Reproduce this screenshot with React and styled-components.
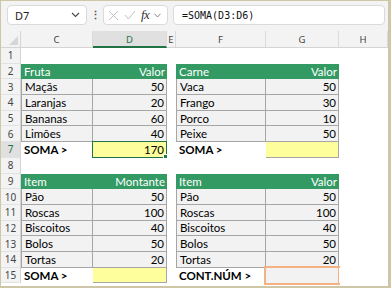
import styled, { createGlobalStyle } from "styled-components";

const Global = createGlobalStyle`
  html, body { margin: 0; padding: 0; background: #ffffff; }
  body { font-family: "Lato", "Liberation Sans", sans-serif; }
`;

const Frame = styled.div`
  width: 391px;
  height: 288px;
  box-sizing: border-box;
  border: 1px solid #cfc6a8;
  border-width: 1px 3px 2px 1px;
  background: #ffffff;
  overflow: hidden;
  display: flex;
  flex-direction: column;
`;

const FormulaBar = styled.div`
  height: 30px;
  background: #f3f3f3;
  display: flex;
  align-items: flex-start;
  padding: 4px 3px 0 6px;
  box-sizing: border-box;
  gap: 0;
`;

const Box = styled.div`
  height: 20px;
  box-sizing: border-box;
  background: #ffffff;
  border: 1px solid #dadada;
  border-radius: 4px;
  display: flex;
  align-items: center;
`;

const NameBox = styled(Box)`
  width: 80px;
  padding: 0 6px 0 7px;
  justify-content: space-between;
  font-family: "Noto Sans", sans-serif;
  font-size: 11px;
  color: #222;
`;

const Dots = styled.div`
  width: 16px;
  height: 20px;
  display: flex;
  align-items: center;
  justify-content: center;
  color: #555;
  font-size: 11px;
  font-weight: bold;
`;

const FxBox = styled(Box)`
  width: 65px;
  padding: 0 4px;
  gap: 5px;
  margin-right: 5px;
`;

const Fx = styled.span`
  font-family: "Liberation Serif", serif;
  font-style: italic;
  font-size: 13px;
  color: #333;
  letter-spacing: -0.5px;
`;

const FormulaInput = styled(Box)`
  flex: 1;
  padding-left: 8px;
  font-family: "DejaVu Sans Mono", monospace;
  font-size: 10px;
  color: #111;
`;

const Sheet = styled.div`
  display: grid;
  grid-template-columns: 20px 72px 74px 9px 90px 73px 49px;
  grid-template-rows: 17px repeat(15, 15.7px);
  font-size: 11.5px;
`;

const ColHead = styled.div`
  background: ${(p) => (p.$active ? "#e0e0e0" : "#f3f3f3")};
  color: ${(p) => (p.$active ? "#217346" : "#444")};
  border-bottom: ${(p) => (p.$active ? "2px solid #217346" : "1px solid #d4d4d4")};
  border-right: 1px solid #dadada;
  box-sizing: border-box;
  font-family: "Noto Sans", sans-serif;
  font-size: 9.5px;
  display: flex;
  align-items: center;
  justify-content: center;
  padding-top: 1px;
`;

const Corner = styled.div`
  background: #f3f3f3;
  border-right: 1px solid #d4d4d4;
  border-bottom: 1px solid #d4d4d4;
  box-sizing: border-box;
  position: relative;
  &::after {
    content: "";
    position: absolute;
    right: 2px;
    bottom: 2px;
    border-style: solid;
    border-width: 0 0 9px 9px;
    border-color: transparent transparent #d6d6d6 transparent;
  }
`;

const RowHead = styled.div`
  background: ${(p) => (p.$active ? "#e0e0e0" : "#f3f3f3")};
  color: ${(p) => (p.$active ? "#217346" : "#444")};
  border-right: 1px solid #d4d4d4;
  border-bottom: 1px solid #e2e2e2;
  box-sizing: border-box;
  font-family: "Noto Sans", sans-serif;
  font-size: 10px;
  display: flex;
  align-items: center;
  justify-content: center;
`;

const fills = {
  empty: "#ffffff",
  head: "#339a63",
  data: "#f2f2f2",
  sum: "#ffffff",
  yellow: "#fefe9c",
  count: "#f2f2f2",
};

const Cell = styled.div`
  position: relative;
  box-sizing: border-box;
  background: ${(p) => fills[p.$kind]};
  color: ${(p) => (p.$kind === "head" ? "#ffffff" : "#000000")};
  font-weight: ${(p) => (p.$kind === "sum" ? 700 : 400)};
  display: flex;
  align-items: center;
  justify-content: ${(p) => (p.$right ? "flex-end" : "flex-start")};
  padding: 0 2px 0 3px;
  white-space: nowrap;
  border-right: ${(p) => (p.$kind === "data" || p.$kind === "yellow" ? "1px solid #a6a6a6" : "none")};
  border-bottom: ${(p) => (p.$kind === "data" || p.$kind === "yellow" ? "1px solid #a6a6a6" : "none")};
  border-left: ${(p) => ((p.$kind === "data" || p.$kind === "yellow") && p.$first ? "1px solid #a6a6a6" : "none")};
`;

const Selected = styled.div`
  position: absolute;
  inset: -1px -1px -1px -1px;
  border: 1.5px solid #217346;
  pointer-events: none;
  &::after {
    content: "";
    position: absolute;
    right: -3px;
    bottom: -3px;
    width: 4px;
    height: 4px;
    background: #217346;
    border: 1px solid #fff;
  }
`;

const CountMark = styled.div`
  position: absolute;
  inset: -2px -1px -2px -2px;
  border: 2px solid #f4b183;
  pointer-events: none;
`;

const cols = ["C", "D", "E", "F", "G", "H"];

const h = (t, right) => ({ k: "head", t, right });
const d = (t, right) => ({ k: "data", t, right });

const rows = {
  2: { C: h("Fruta"), D: h("Valor", 1), F: h("Carne"), G: h("Valor", 1) },
  3: { C: d("Maçãs"), D: d("50", 1), F: d("Vaca"), G: d("50", 1) },
  4: { C: d("Laranjas"), D: d("20", 1), F: d("Frango"), G: d("30", 1) },
  5: { C: d("Bananas"), D: d("60", 1), F: d("Porco"), G: d("10", 1) },
  6: { C: d("Limões"), D: d("40", 1), F: d("Peixe"), G: d("50", 1) },
  7: {
    C: { k: "sum", t: "SOMA >" },
    D: { k: "yellow", t: "170", right: 1, selected: 1 },
    F: { k: "sum", t: "SOMA >" },
    G: { k: "yellow", t: "" },
  },
  9: { C: h("Item"), D: h("Montante", 1), F: h("Item"), G: h("Valor", 1) },
  10: { C: d("Pão"), D: d("50", 1), F: d("Pão"), G: d("50", 1) },
  11: { C: d("Roscas"), D: d("100", 1), F: d("Roscas"), G: d("100", 1) },
  12: { C: d("Biscoitos"), D: d("40", 1), F: d("Biscoitos"), G: d("40", 1) },
  13: { C: d("Bolos"), D: d("50", 1), F: d("Bolos"), G: d("50", 1) },
  14: { C: d("Tortas"), D: d("20", 1), F: d("Tortas"), G: d("20", 1) },
  15: {
    C: { k: "sum", t: "SOMA >" },
    D: { k: "yellow", t: "" },
    F: { k: "sum", t: "CONT.NÚM >" },
    G: { k: "count", t: "", counting: 1 },
  },
};

const Chevron = () => (
  <svg width="9" height="6" viewBox="0 0 9 6">
    <path d="M1 1 L4.5 4.5 L8 1" fill="none" stroke="#444" strokeWidth="1.1" />
  </svg>
);

const Cross = () => (
  <svg width="11" height="11" viewBox="0 0 11 11">
    <path d="M1 1 L10 10 M10 1 L1 10" stroke="#c2c2c2" strokeWidth="1" />
  </svg>
);

const Check = () => (
  <svg width="12" height="10" viewBox="0 0 12 10">
    <path d="M1 5 L4.5 9 L11 1" fill="none" stroke="#c2c2c2" strokeWidth="1" />
  </svg>
);

export default function App() {
  return (
    <>
      <Global />
      <Frame>
        <FormulaBar>
          <NameBox>
            <span>D7</span>
            <Chevron />
          </NameBox>
          <Dots>⋮</Dots>
          <FxBox>
            <Cross />
            <Check />
            <Fx>fx</Fx>
            <svg width="7" height="5" viewBox="0 0 7 5">
              <path d="M0.5 0.8 L3.5 4 L6.5 0.8" fill="none" stroke="#777" strokeWidth="0.9" />
            </svg>
          </FxBox>
          <FormulaInput>=SOMA(D3:D6)</FormulaInput>
        </FormulaBar>
        <Sheet>
          <Corner />
          {cols.map((c) => (
            <ColHead key={c} $active={c === "D"}>
              {c}
            </ColHead>
          ))}
          {Array.from({ length: 15 }, (_, i) => i + 1).map((r) => (
            <Row key={r} r={r} />
          ))}
        </Sheet>
      </Frame>
    </>
  );
}

function Row({ r }) {
  const data = rows[r] || {};
  return (
    <>
      <RowHead $active={r === 7}>{r}</RowHead>
      {cols.map((c) => {
        const v = data[c];
        if (!v) return <Cell key={c} $kind="empty" />;
        return (
          <Cell key={c} $kind={v.k} $right={v.right} $first={c === "C" || c === "F"}>
            {v.t}
            {v.selected && <Selected />}
            {v.counting && <CountMark />}
          </Cell>
        );
      })}
    </>
  );
}
